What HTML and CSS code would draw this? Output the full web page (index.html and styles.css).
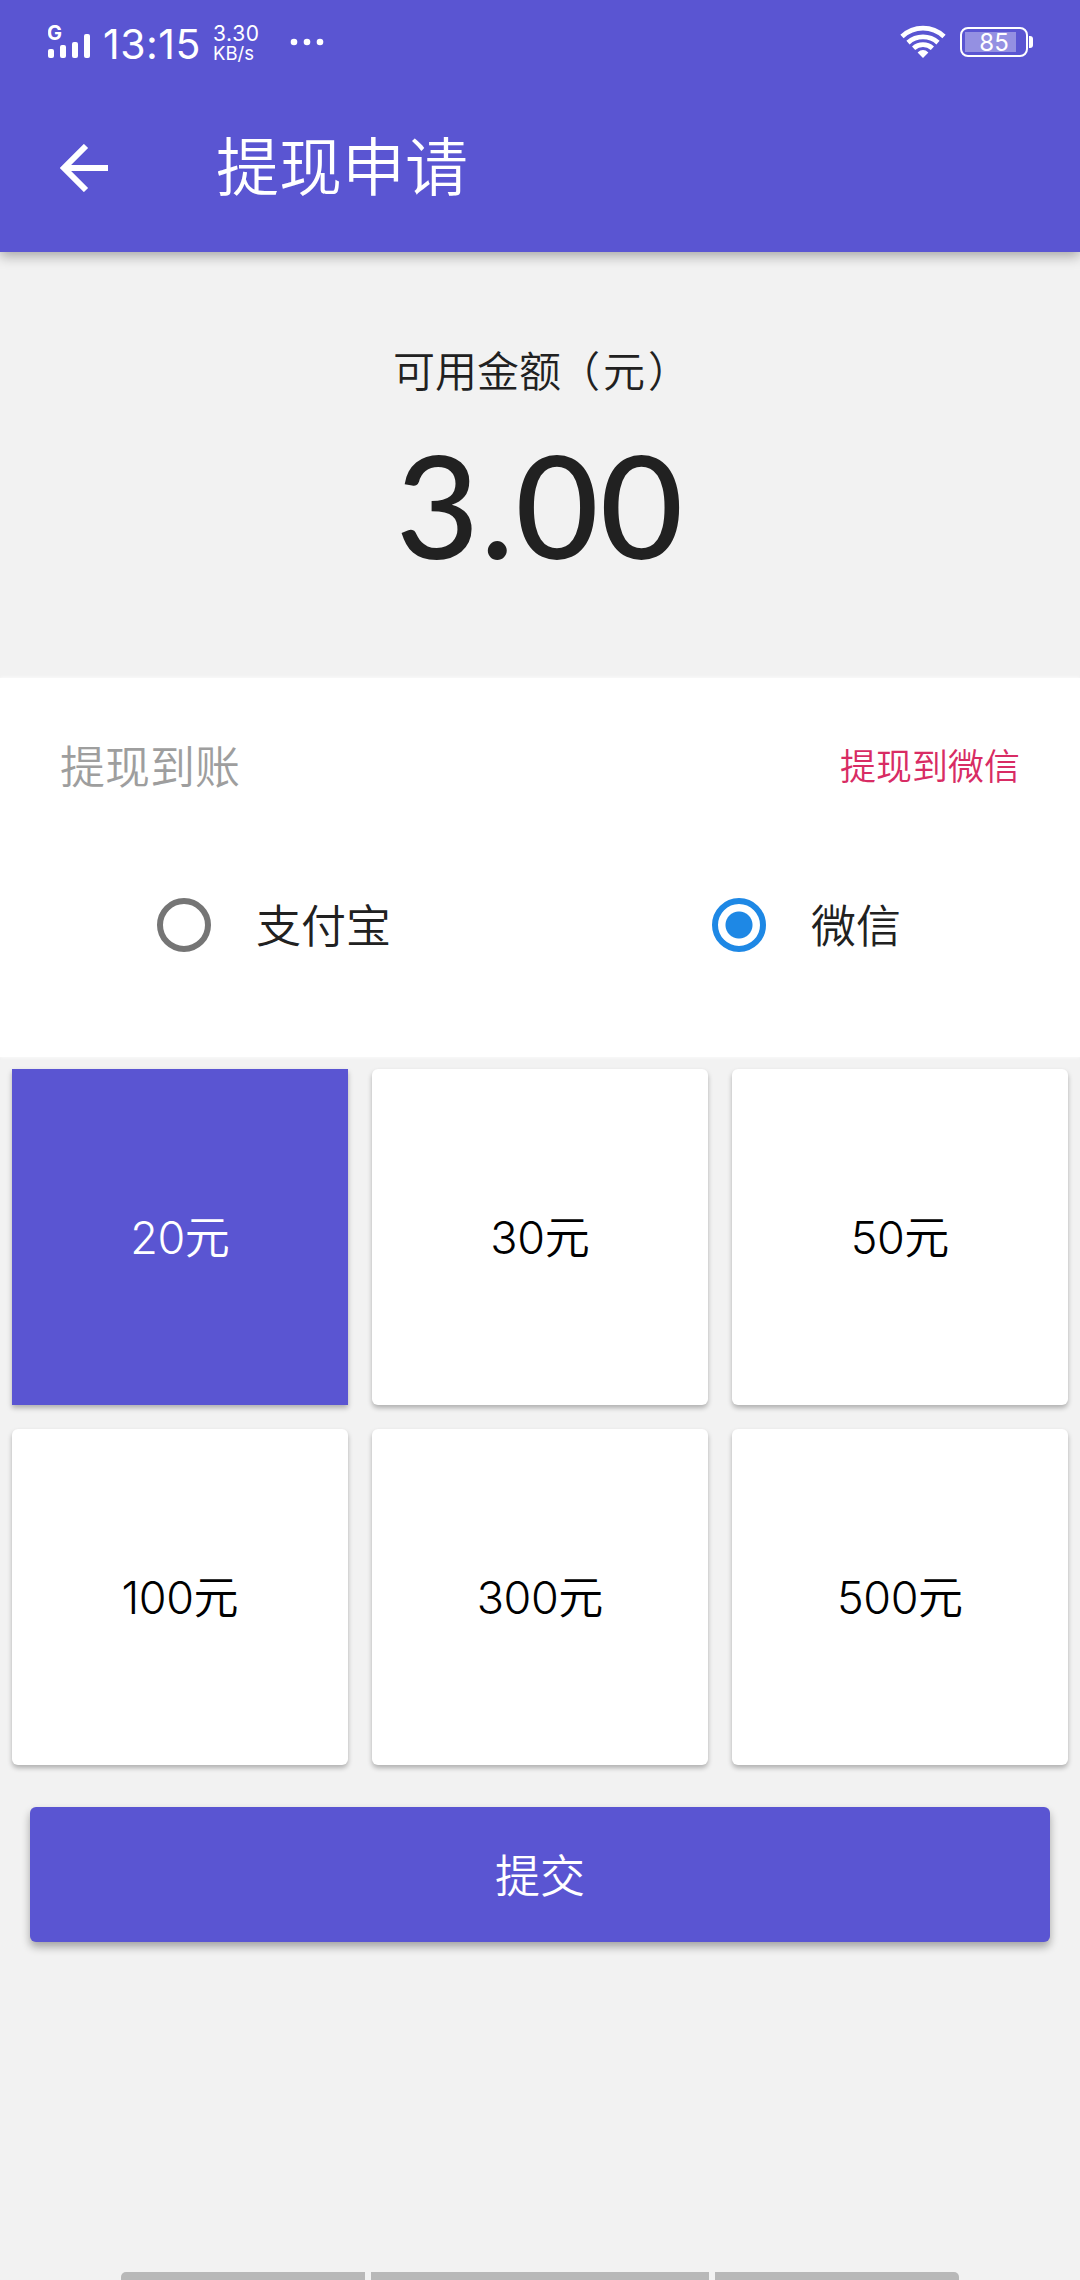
FILE: index.html
```html
<!DOCTYPE html>
<html lang="zh-CN">
<head>
  <meta charset="UTF-8">
  <title>提现申请</title>
  <link rel="stylesheet" href="styles.css">
</head>
<body>

<header class="header">
  <div class="status">
    <svg class="signal" width="44" height="42" viewBox="0 -6 44 42">
      <text x="-1" y="17" class="signal-g">G</text>
      <g fill="#fff">
        <rect x="0" y="26" width="6" height="9" rx="2"/>
        <rect x="12" y="22" width="6" height="13" rx="2"/>
        <rect x="24" y="19" width="6" height="16" rx="2"/>
        <rect x="36" y="11" width="6" height="24" rx="2"/>
      </g>
    </svg>
    <span class="time">13:15</span>
    <span class="speed"><b class="rate">3.30</b><br>KB/s</span>
    <svg class="dots" width="34" height="8" viewBox="0 0 34 8" fill="#fff">
      <circle cx="4" cy="4" r="3.3"/><circle cx="17" cy="4" r="3.3"/><circle cx="30" cy="4" r="3.3"/>
    </svg>
    <svg class="wifi" width="46" height="34" viewBox="0 0 46 34" fill="none" stroke="#fff" stroke-width="4.8">
      <path d="M2 11.5C14 .4 32 .4 44 11.5"/>
      <path d="M8 17.6C16.500 10 29.500 10 38 17.600"/>
      <path d="M13.600 23.300C19 18.500 27 18.500 32.400 23.300"/>
      <path d="M17.600 27.400Q23 22.500 28.400 27.400L23 33z" fill="#fff" stroke="none"/>
    </svg>
    <div class="battery"><div class="level">85</div></div>
  </div>
  <div class="toolbar">
    <svg class="back" width="48" height="48" viewBox="0 0 48 48" fill="none" stroke="#fff" stroke-width="6">
      <path d="M48 24H5M26 2L4 24L26 46"/>
    </svg>
    <h1 class="title">提现申请</h1>
  </div>
</header>

<section class="balance">
  <div class="balance-label">可用金额<span class="paren">（</span>元<span class="paren-end">）</span></div>
  <div class="balance-value">3.00</div>
</section>

<section class="account">
  <div class="account-head">
    <span class="account-label">提现到账</span>
    <span class="account-type">提现到微信</span>
  </div>
  <div class="options">
    <label class="option"><span class="radio"></span><span class="name">支付宝</span></label>
    <label class="option"><span class="radio checked"></span><span class="name">微信</span></label>
  </div>
</section>

<section class="amounts">
  <div class="amount active"><span class="num">20</span>元</div>
  <div class="amount"><span class="num">30</span>元</div>
  <div class="amount"><span class="num">50</span>元</div>
  <div class="amount"><span class="num">100</span>元</div>
  <div class="amount"><span class="num">300</span>元</div>
  <div class="amount"><span class="num">500</span>元</div>
</section>

<button class="submit">提交</button>

<footer class="navbar"><i></i><i></i><i></i></footer>

</body>
</html>
```
FILE: styles.css
```css
* { box-sizing: border-box; }
body { margin: 0; height: 2280px; display: flex; flex-direction: column; overflow: hidden; background: #f2f2f2; color: #212121; font-family: Lato, "Noto Sans CJK SC", sans-serif; font-weight: 350; }

.header { height: 252px; flex: none; background: #5a55d2; color: #fff; box-shadow: 0 4px 12px rgba(0,0,0,.32); }
.status { height: 84px; padding-left: 48px; display: flex; align-items: flex-start; }
.signal { margin-top: 17px; }
.signal-g { font: 700 20px Inter, sans-serif; fill: #fff; }
.time { margin: 19px 0 0 11px; width: 98px; font: 400 41px/50px Inter, sans-serif; letter-spacing: .5px; }
.speed { margin: 25px 0 0 12px; width: 50px; font: 400 18.5px/19px Inter, sans-serif; }
.rate { font-weight: 400; font-size: 21px; line-height: 18px; letter-spacing: .6px; }
.dots { margin: 38px 0 0 27px; }
.wifi { margin: 25px 0 0 576px; }
.battery { position: relative; width: 68px; height: 30px; margin: 27px 0 0 14px; padding: 3px; border: 2px solid #fff; border-radius: 8px; }
.battery::after { content: ""; position: absolute; left: 67px; top: 7px; width: 4px; height: 12px; background: #fff; border-radius: 0 3px 3px 0; }
.level { height: 20px; background: linear-gradient(90deg, #9490e2 51px, transparent 51px); text-align: center; font: 400 24px/21px Inter, sans-serif; }

.toolbar { height: 168px; padding-left: 60px; display: flex; align-items: center; }
.title { margin: 0 0 4px 108px; font-size: 63px; font-weight: 350; line-height: 84px; }

.balance { height: 426px; flex: none; padding-top: 91px; text-align: center; }
.balance-label { font-size: 42px; line-height: 56px; }
.paren { margin: 0 3px 0 -3px; }
.paren-end { margin: 0 -3px 0 3px; }
.balance-value { margin-top: 18px; font-size: 144px; line-height: 174px; font-weight: 500; letter-spacing: 1px; }

.account { height: 379px; flex: none; background: #fff; box-shadow: 0 0 4px #fff; }
.account-head { height: 172px; padding: 0 60px; display: flex; justify-content: space-between; align-items: center; }
.account-label { font-size: 45px; color: #9e9e9e; }
.account-type { font-size: 36px; color: #d82c64; }
.options { display: flex; height: 150px; padding-left: 157px; }
.option { width: 555px; flex: none; display: flex; align-items: center; font-size: 45px; }
.option:last-child { width: 368px; }
.name { padding-bottom: 4px; }
.radio { width: 54px; height: 54px; margin-right: 45px; border: 6px solid #757575; border-radius: 50%; }
.checked { border-color: #1e88e5; background: radial-gradient(circle, #1e88e5 13px, transparent 14px); }

.amounts { display: grid; grid-template-columns: repeat(3, 336px); grid-auto-rows: 336px; gap: 24px; padding: 12px 12px 0; }
.amount { display: flex; align-items: baseline; justify-content: center; background: #fff; color: #000; font-size: 45px; line-height: 336px; border-radius: 6px; box-shadow: 0 3px 5px rgba(0,0,0,.28); }
.num { font-family: Inter, sans-serif; font-weight: 300; letter-spacing: -.4px; }
.active { background: #5a55d2; color: #fff; border-radius: 0; }

.submit { height: 135px; flex: none; margin: 42px 30px 0; padding: 0 0 3px; border: none; border-radius: 6px; background: #5a55d2; color: #fff; font: inherit; font-size: 45px; box-shadow: 0 5px 8px rgba(0,0,0,.32); }

.navbar { display: flex; gap: 6px; height: 8px; margin: auto 121px 0; }
.navbar i { flex: 244; background: #b8b8b8; }
.navbar i:nth-child(2) { flex: 338; }
.navbar i:first-child { border-radius: 5px 0 0 0; }
.navbar i:last-child { border-radius: 0 5px 0 0; }
```
